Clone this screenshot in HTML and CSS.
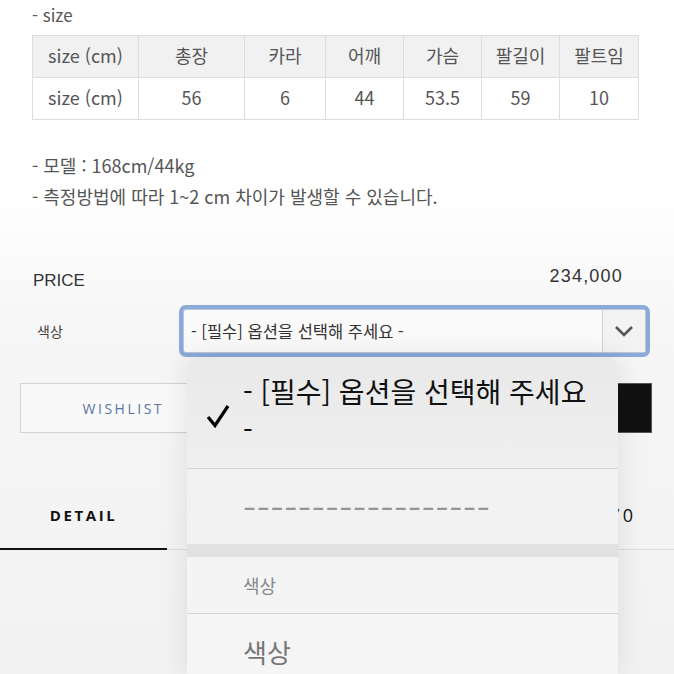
FILE: index.html
```html
<!DOCTYPE html>
<html lang="ko">
<head>
<meta charset="utf-8">
<title>Product</title>
<link rel="stylesheet" href="styles.css">
</head>
<body>
<div class="page">
  <p class="size-title">- size</p>
  <table class="size-table">
    <colgroup>
      <col class="c1"><col class="c2"><col class="c3"><col class="c4"><col class="c5"><col class="c6"><col class="c7">
    </colgroup>
    <tr class="head"><td>size (cm)</td><td>총장</td><td>카라</td><td>어깨</td><td>가슴</td><td>팔길이</td><td>팔트임</td></tr>
    <tr><td>size (cm)</td><td>56</td><td>6</td><td>44</td><td>53.5</td><td>59</td><td>10</td></tr>
  </table>
  <div class="notes">
    <p>- 모델 : 168cm/44kg</p>
    <p>- 측정방법에 따라 1~2 cm 차이가 발생할 수 있습니다.</p>
  </div>
  <div class="price-row">
    <span class="price-label">PRICE</span>
    <span class="price-value">234,000</span>
  </div>
  <div class="option-row">
    <span class="opt-label">색상</span>
    <div class="select">
      <span class="select-text">- [필수] 옵션을 선택해 주세요 -</span>
      <span class="select-arrow">
        <svg width="20" height="12" viewBox="0 0 20 12"><path d="M2 2 L10 10 L18 2" fill="none" stroke="#555" stroke-width="2.6"/></svg>
      </span>
    </div>
  </div>
  <div class="buttons">
    <div class="btn btn-wish">WISHLIST</div>
    <div class="btn btn-cart"></div>
    <div class="btn btn-buy"></div>
  </div>
  <div class="tabs">
    <div class="tab active">DETAIL</div>
    <div class="tab-rest"><span class="tab-count">70</span></div>
  </div>

  <div class="popup">
    <div class="pop-opt pop-first">
      <span class="check">
        <svg width="26" height="26" viewBox="0 0 26 26"><path d="M3 14 L10 22.5 L23 3" fill="none" stroke="#000" stroke-width="3.2" stroke-linejoin="miter"/></svg>
      </span>
      <span class="pop-text">- [필수] 옵션을 선택해 주세요<br>-</span>
    </div>
    <div class="pop-opt pop-dash"><span class="dash-text">------------------</span></div>
    <div class="pop-band"></div>
    <div class="pop-group">색상</div>
    <div class="pop-opt pop-last">색상</div>
  </div>
</div>
</body>
</html>
```

FILE: styles.css
```css
html, body {
  margin: 0;
  padding: 0;
}
body {
  width: 674px;
  height: 674px;
  overflow: hidden;
  font-family: "Noto Sans CJK KR", "Noto Sans", sans-serif;
  color: #555;
  background: linear-gradient(180deg, #ffffff 0px, #ffffff 190px, #f6f6f6 330px, #f2f2f2 674px);
}
.page {
  position: relative;
  height: 674px;
}
.size-title {
  margin: 0;
  padding: 4px 0 0 32px;
  font-size: 17px;
  line-height: 22px;
  color: #555;
}
.size-table {
  margin: 9px 0 0 32px;
  width: 606px;
  border-collapse: collapse;
  table-layout: fixed;
  font-size: 18px;
  color: #555;
}
.c1, .c2 { width: 106px; }
.c3 { width: 81px; }
.c4, .c5, .c6 { width: 78px; }
.c7 { width: 79px; }
.size-table td {
  border: 1px solid #dddddd;
  height: 42px;
  padding: 0 0 4px 0;
  box-sizing: border-box;
  line-height: 1;
  text-align: center;
  vertical-align: middle;
  background: #fff;
}
.size-table tr.head td {
  background: #f1f1f1;
}
.notes {
  margin-top: 30px;
  padding-left: 32px;
}
.notes p {
  margin: 0;
  font-size: 18px;
  line-height: 31px;
  color: #555;
}
.price-row {
  margin-top: 52px;
  display: flex;
  justify-content: space-between;
  align-items: flex-start;
  padding: 0 51px 0 33px;
  font-family: "Liberation Sans", Arial, sans-serif;
  color: #333;
}
.price-label {
  font-size: 17px;
  line-height: 24px;
  padding-top: 5px;
}
.price-value {
  font-size: 18px;
  line-height: 24px;
  letter-spacing: 1.2px;
}
.option-row {
  margin-top: 16px;
  display: flex;
  align-items: center;
  padding-left: 37px;
}
.opt-label {
  width: 146px;
  font-size: 14px;
  color: #444;
}
.select {
  width: 463px;
  height: 44px;
  box-sizing: border-box;
  border: 1px solid #b9c7dc;
  border-radius: 3px;
  box-shadow: 0 0 0 4px #8aaad8;
  background: #fafafa;
  display: flex;
  align-items: center;
}
.select-text {
  flex: 1;
  padding-left: 7px;
  font-size: 16.5px;
  color: #333;
}
.select-arrow {
  width: 42px;
  height: 42px;
  border-left: 1px solid #cfcfcf;
  background: #f3f3f3;
  display: flex;
  align-items: center;
  justify-content: center;
}
.buttons {
  margin-top: 30px;
  display: flex;
  gap: 6px;
  padding: 0 22px 0 20px;
}
.btn {
  flex: 1;
  height: 50px;
  box-sizing: border-box;
  display: flex;
  align-items: center;
  justify-content: center;
  font-family: "Open Sans", "Noto Sans", sans-serif;
  font-size: 14px;
  letter-spacing: 2.5px;
}
.btn-wish, .btn-cart {
  border: 1px solid #d2d2d2;
  background: #f9f9f9;
  color: #5a74a6;
}
.btn-buy {
  background: #111;
  border: 1px solid #555;
}
.tabs {
  margin-top: 50px;
  display: flex;
  border-bottom: 1px solid #dddddd;
}
.tab {
  width: 167px;
  height: 65px;
  line-height: 65px;
  text-align: center;
  font-family: "Open Sans", "Noto Sans", sans-serif;
  font-weight: 700;
  font-size: 15px;
  letter-spacing: 2.6px;
  color: #111;
}
.tab.active {
  border-bottom: 2px solid #111;
  margin-bottom: -1px;
}
.tab-rest {
  flex: 1;
  display: flex;
  justify-content: flex-end;
  align-items: center;
  padding-right: 38px;
}
.tab-count {
  font-family: "Open Sans", "Noto Sans", sans-serif;
  font-size: 18px;
  letter-spacing: 3px;
  color: #111;
  position: relative;
  top: -1px;
}

/* dropdown popup overlay */
.popup {
  position: absolute;
  left: 187px;
  top: 357px;
  width: 431px;
  height: 317px;
  border-radius: 13px 13px 0 0;
  overflow: hidden;
  background: #f4f4f4;
  box-shadow: 0 0 30px rgba(0, 0, 0, 0.10);
  color: #111;
}
.pop-opt {
  box-sizing: border-box;
}
.pop-first {
  height: 112px;
  display: flex;
  align-items: center;
  padding-bottom: 6px;
  border-bottom: 1px solid #d4d4d4;
  background: linear-gradient(180deg, #e9e9e9 0%, #efefef 100%);
}
.check {
  width: 56px;
  display: flex;
  justify-content: flex-start;
  padding-left: 18px;
  box-sizing: border-box;
  padding-top: 12px;
}
.pop-text {
  font-size: 28px;
  line-height: 38px;
  color: #111;
}
.pop-dash {
  height: 75px;
  line-height: 75px;
  padding-left: 56px;
  background: #f2f2f2;
}
.dash-text {
  display: inline-block;
  font-family: "Liberation Sans", Arial, sans-serif;
  font-size: 28px;
  letter-spacing: 0.5px;
  color: #959595;
  transform: scaleX(1.4);
  transform-origin: left center;
}
.pop-band {
  height: 13px;
  background: #e1e1e1;
}
.pop-group {
  height: 57px;
  line-height: 57px;
  padding-left: 56px;
  font-size: 18px;
  color: #888;
  background: #f4f4f4;
  border-bottom: 1px solid #d4d4d4;
  box-sizing: border-box;
}
.pop-last {
  height: 76px;
  line-height: 76px;
  padding-left: 56px;
  font-size: 26px;
  color: #777;
  background: #f5f5f5;
}
```
